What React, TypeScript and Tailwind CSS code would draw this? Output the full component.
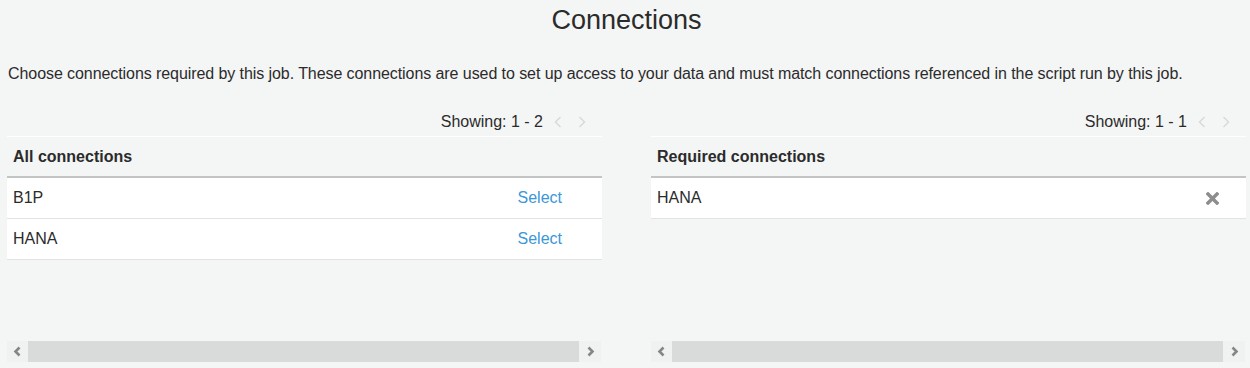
import React from "react";

const font = { fontFamily: '"Liberation Sans", Arial, sans-serif' };

function ChevronL({ className = "" }: { className?: string }) {
  return (
    <svg width="8" height="12" viewBox="0 0 8 12" className={className}>
      <path d="M6.5 1 L1.5 6 L6.5 11" fill="none" stroke="currentColor" strokeWidth="1.3" />
    </svg>
  );
}
function ChevronR({ className = "" }: { className?: string }) {
  return (
    <svg width="8" height="12" viewBox="0 0 8 12" className={className}>
      <path d="M1.5 1 L6.5 6 L1.5 11" fill="none" stroke="currentColor" strokeWidth="1.3" />
    </svg>
  );
}

function Scrollbar() {
  return (
    <div className="flex h-[21px] mr-[1px]">
      <div className="w-[21px] bg-[#f0f1f1] flex items-center justify-center text-[#858787]">
        <svg width="9" height="11" viewBox="0 0 9 11">
          <path d="M6.5 1.5 L2.5 5.5 L6.5 9.5" fill="none" stroke="currentColor" strokeWidth="2.6" />
        </svg>
      </div>
      <div className="flex-1 bg-[#d9dbda]" />
      <div className="w-[22px] bg-[#f0f1f1] flex items-center justify-center text-[#858787]">
        <svg width="9" height="11" viewBox="0 0 9 11">
          <path d="M2.5 1.5 L6.5 5.5 L2.5 9.5" fill="none" stroke="currentColor" strokeWidth="2.6" />
        </svg>
      </div>
    </div>
  );
}

function Panel({
  showing,
  title,
  rows,
  action,
}: {
  showing: string;
  title: string;
  rows: string[];
  action: "select" | "remove";
}) {
  return (
    <div className="flex flex-col">
      <div className="h-[28px] flex items-center justify-end pr-[16px] text-[16px] text-[#2b2b2b]">
        <span>{showing}</span>
        <span className="ml-[11px] text-[#d6d8d8] flex"><ChevronL /></span>
        <span className="ml-[16px] text-[#d6d8d8] flex"><ChevronR /></span>
      </div>
      <div className="h-[226px] flex flex-col">
        <div className="flex-1">
          <div className="h-[42px] border-t border-white border-b-2 border-b-[#c3c5c5] flex items-center pl-[6px] font-bold text-[16px] text-[#2b2b2b]">
            {title}
          </div>
          {rows.map((r) => (
            <div
              key={r}
              className="h-[41px] bg-white border-b border-[#e2e3e3] flex items-center justify-between pl-[6px] text-[16px] text-[#2b2b2b]"
            >
              <span>{r}</span>
              {action === "select" ? (
                <span className="mr-[40px] text-[#3b97d8]">Select</span>
              ) : (
                <span className="mr-[27px] flex">
                  <svg width="13" height="13" viewBox="0 0 13 13">
                    <path d="M2 2 L11 11 M11 2 L2 11" stroke="#8c8e8e" strokeWidth="3.4" strokeLinecap="square" />
                  </svg>
                </span>
              )}
            </div>
          ))}
        </div>
        <Scrollbar />
      </div>
    </div>
  );
}

export default function App() {
  return (
    <div className="w-[1250px] h-[368px] bg-[#f4f5f5] overflow-hidden" style={font}>
      <div className="h-[40px] flex items-center justify-center text-[27px] text-[#2b2b2b] leading-[40px] pl-[3px]">
        Connections
      </div>
      <div className="mt-[18px] h-[32px] flex items-center pl-[8px] text-[16px] text-[#2b2b2b] tracking-[-0.075px]">
        Choose connections required by this job. These connections are used to set up access to your data and must match connections referenced in the script run by this job.
      </div>
      <div className="mt-[18px] grid grid-cols-2 gap-[49px] pl-[7px] pr-[4px]">
        <Panel showing="Showing: 1 - 2" title="All connections" rows={["B1P", "HANA"]} action="select" />
        <Panel showing="Showing: 1 - 1" title="Required connections" rows={["HANA"]} action="remove" />
      </div>
    </div>
  );
}
